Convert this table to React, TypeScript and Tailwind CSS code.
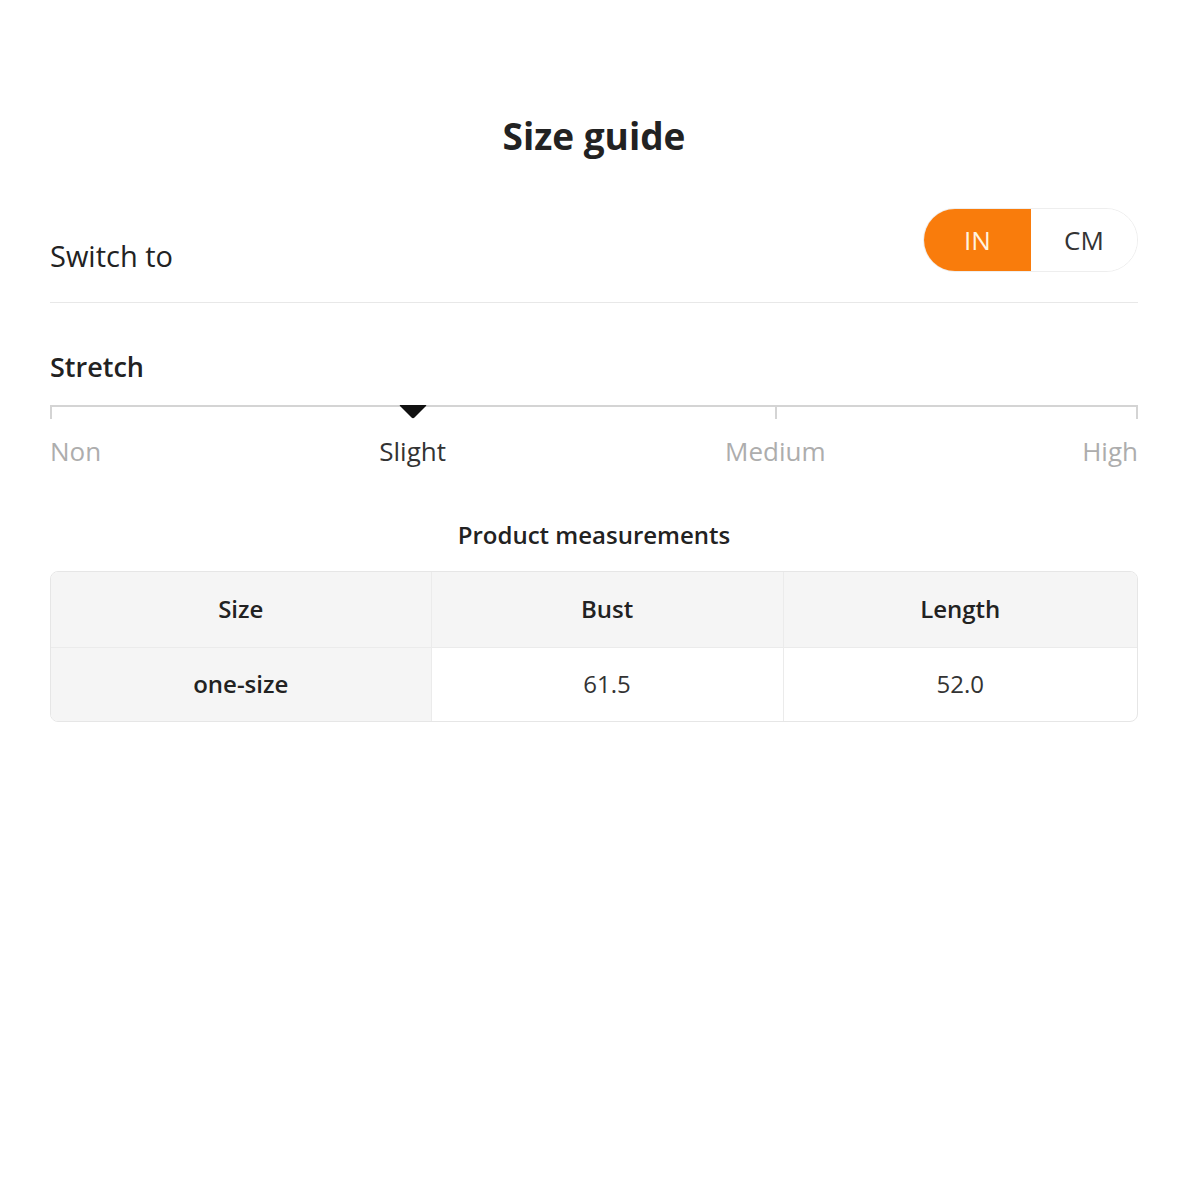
import React, { useState } from 'react';

const levels = ['Non', 'Slight', 'Medium', 'High'];

function StretchScale({ active }: { active: number }) {
  return (
    <div className="mt-[17px]">
      <div className="relative h-[16px]">
        <div className="absolute left-0 right-0 top-[1px] h-[2px] bg-[#d4d4d4]" />
        <div className="absolute left-0 top-[1px] w-[2px] h-[14px] bg-[#d4d4d4]" />
        <div className="absolute left-2/3 top-[1px] w-[2px] h-[14px] bg-[#d4d4d4]" />
        <div className="absolute right-0 top-[1px] w-[2px] h-[14px] bg-[#d4d4d4]" />
        <svg
          className="absolute left-1/3 top-0 -translate-x-1/2"
          width="30"
          height="15"
          viewBox="0 0 30 15"
        >
          <path d="M2 1 Q1 1 2.5 2.5 L13.5 13.5 Q15 15 16.5 13.5 L27.5 2.5 Q29 1 28 1 Z" fill="#111" />
        </svg>
      </div>
      <div className="relative h-[38px] mt-[12px] text-[26px] leading-[38px]">
        <div className="flex justify-between">
          <span className={active === 0 ? 'text-[#333]' : 'text-[#adadad]'}>{levels[0]}</span>
          <span className={active === 3 ? 'text-[#333]' : 'text-[#adadad]'}>{levels[3]}</span>
        </div>
        <span className={`absolute top-0 left-1/3 -translate-x-1/2 ${active === 1 ? 'text-[#333]' : 'text-[#adadad]'}`}>
          {levels[1]}
        </span>
        <span className={`absolute top-0 left-2/3 -translate-x-1/2 ${active === 2 ? 'text-[#333]' : 'text-[#adadad]'}`}>
          {levels[2]}
        </span>
      </div>
    </div>
  );
}

export default function App() {
  const [unit, setUnit] = useState<'IN' | 'CM'>('IN');

  return (
    <div className="min-h-[1200px] bg-white text-[#222] font-['Open_Sans',sans-serif]">
      <div className="pl-[50px] pr-[62px]">
        <h1 className="pt-[109px] text-center text-[37px] leading-[54px] font-bold text-[#222]">Size guide</h1>

        {/* unit switch */}
        <div className="mt-[45px] flex items-end justify-between pb-[30px] border-b border-[#e8e8e8]">
          <span className="text-[29px] leading-[40px] mb-[-4px] font-medium">Switch to</span>
          <div className="flex h-[64px] rounded-full overflow-hidden border border-[#eeeeee] text-[26px]">
            <button
              onClick={() => setUnit('IN')}
              className={`w-[107px] ${unit === 'IN' ? 'bg-[#f97c0c] text-[#fff3e0]' : 'bg-white text-[#333]'}`}
            >
              IN
            </button>
            <button
              onClick={() => setUnit('CM')}
              className={`w-[106px] ${unit === 'CM' ? 'bg-[#f97c0c] text-[#fff3e0]' : 'bg-white text-[#333]'}`}
            >
              CM
            </button>
          </div>
        </div>

        {/* stretch */}
        <div className="mt-[44px] text-[27px] leading-[40px] font-semibold">Stretch</div>
        <StretchScale active={1} />

        {/* measurements */}
        <div className="mt-[48px] text-center text-[24px] leading-[34px] font-semibold">Product measurements</div>
        <div className="mt-[19px] rounded-[8px] border border-[#e6e6e6] overflow-hidden">
          <table className="w-full border-collapse text-[24px]">
            <thead>
              <tr className="h-[75px] bg-[#f5f5f5]">
                <th className="w-[380px] font-semibold text-[#222]">Size</th>
                <th className="w-[352px] font-semibold text-[#222] border-l border-[#ebebeb]">Bust</th>
                <th className="font-semibold text-[#222] border-l border-[#ebebeb]">Length</th>
              </tr>
            </thead>
            <tbody>
              <tr className="h-[74px] border-t border-[#ebebeb]">
                <td className="text-center bg-[#f5f5f5] font-semibold text-[#222]">one-size</td>
                <td className="text-center text-[#333] border-l border-[#ebebeb]">61.5</td>
                <td className="text-center text-[#333] border-l border-[#ebebeb]">52.0</td>
              </tr>
            </tbody>
          </table>
        </div>
      </div>
    </div>
  );
}
